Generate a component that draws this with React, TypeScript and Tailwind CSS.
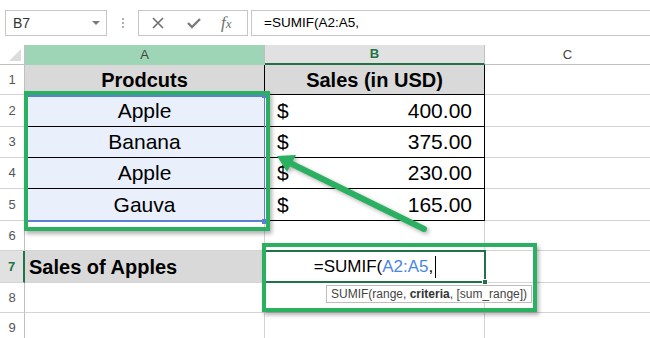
import React from "react";

const GREEN = "#2bb061";

type RowDef = {
  num: string;
  h: string;
  a: React.ReactNode;
  b: React.ReactNode;
  aCls: string;
  bCls: string;
  head?: string;
};

const Money = ({ v }: { v: string }) => (
  <div className="flex w-full items-center justify-between px-3">
    <span>$</span>
    <span>{v}</span>
  </div>
);

const rows: RowDef[] = [
  {
    num: "1",
    h: "h-[30px]",
    a: <span className="font-bold text-[20px]">Prodcuts</span>,
    b: <span className="font-bold text-[20px]">Sales (in USD)</span>,
    aCls: "bg-[#d9d9d9] border-r-black border-b-black justify-center",
    bCls: "bg-[#d9d9d9] border-r-black border-b-black justify-center",
  },
  {
    num: "2",
    h: "h-[32px]",
    a: "Apple",
    b: <Money v="400.00" />,
    aCls: "bg-[#e9effb] border-r-black border-b-black justify-center",
    bCls: "border-r-black border-b-black",
  },
  {
    num: "3",
    h: "h-[31px]",
    a: "Banana",
    b: <Money v="375.00" />,
    aCls: "bg-[#e9effb] border-r-black border-b-black justify-center",
    bCls: "border-r-black border-b-black",
  },
  {
    num: "4",
    h: "h-[31px]",
    a: "Apple",
    b: <Money v="230.00" />,
    aCls: "bg-[#e9effb] border-r-black border-b-black justify-center",
    bCls: "border-r-black border-b-black",
  },
  {
    num: "5",
    h: "h-[32px]",
    a: "Gauva",
    b: <Money v="165.00" />,
    aCls: "bg-[#e9effb] border-r-black border-b-black justify-center",
    bCls: "border-r-black border-b-black",
  },
  { num: "6", h: "h-[30px]", a: "", b: "", aCls: "", bCls: "" },
  {
    num: "7",
    h: "h-[32px]",
    a: <span className="font-bold text-[20px] pl-[4px]">Sales of Apples</span>,
    b: "",
    aCls: "bg-[#d9d9d9]",
    bCls: "",
    head: "sel",
  },
  { num: "8", h: "h-[30px]", a: "", b: "", aCls: "", bCls: "" },
  { num: "9", h: "h-[30px]", a: "", b: "", aCls: "", bCls: "" },
];

const FormulaBar = () => (
  <div className="flex h-[45px] items-start gap-0 pt-[10px] pl-[5px] font-['Liberation_Sans',sans-serif]">
    <div className="flex h-[26px] w-[102px] items-center justify-between border border-[#c6c6c6] pl-[7px] pr-[6px] text-[14px] text-[#333]">
      <span>B7</span>
      <span className="h-0 w-0 border-x-[4px] border-t-[4px] border-x-transparent border-t-[#7a7a7a]" />
    </div>
    <div className="flex h-[26px] w-[31px] flex-col items-center justify-center gap-[2px]">
      <span className="h-[2px] w-[2px] bg-[#b0b0b0]" />
      <span className="h-[2px] w-[2px] bg-[#b0b0b0]" />
      <span className="h-[2px] w-[2px] bg-[#b0b0b0]" />
    </div>
    <div className="flex h-[26px] w-[110px] items-center border border-[#c6c6c6] pl-[12px]">
      <svg width="14" height="14" viewBox="0 0 14 14">
        <path d="M2 2 L12 12 M12 2 L2 12" stroke="#6e6e6e" strokeWidth="1.6" />
      </svg>
      <svg width="16" height="14" viewBox="0 0 16 14" className="ml-[21px]">
        <path d="M2 7 L6 11 L14 3" stroke="#7a7a7a" strokeWidth="2.4" fill="none" />
      </svg>
      <span className="ml-[19px] font-['Liberation_Serif',serif] text-[17px] italic text-[#6e6e6e]">
        f<span className="text-[13px]">x</span>
      </span>
    </div>
    <div className="ml-[3px] flex h-[26px] flex-1 items-center border-y border-l border-[#c6c6c6] pl-[12px] text-[13.5px] text-black">
      =SUMIF(A2:A5,
    </div>
  </div>
);

const Header = () => (
  <div className="flex h-[20px] text-[13px] text-[#444]">
    <div className="relative w-[25px] border-r border-b border-[#c0c0c0] bg-white">
      <span className="absolute right-[3px] bottom-[3px] h-0 w-0 border-t-[12px] border-t-transparent border-r-[12px] border-r-[#dcdcdc]" />
    </div>
    <div className="flex w-[240px] items-center justify-center bg-[#9fd5b7] border-r border-[#c0c0c0]">A</div>
    <div className="flex w-[220px] items-center justify-center border-r border-b-2 border-r-[#c0c0c0] border-b-[#217346] bg-[#e1e1e1] font-bold text-[#217346]">
      B
    </div>
    <div className="flex flex-1 items-center justify-center border-b border-[#c0c0c0] bg-white">C</div>
  </div>
);

export default function App() {
  return (
    <div className="relative h-[338px] w-[650px] overflow-hidden bg-white font-['Liberation_Sans',sans-serif]">
      <FormulaBar />
      <Header />
      <div className="flex flex-col">
        {rows.map((r) => (
          <div key={r.num} className={`flex ${r.h} text-[21px] text-black`}>
            <div
              className={
                r.head === "sel"
                  ? "flex w-[25px] items-center justify-center border-r-2 border-b border-r-[#217346] border-b-[#d4d4d4] bg-[#e1e1e1] text-[13px] font-bold text-[#217346]"
                  : "flex w-[25px] items-center justify-center border-r border-b border-r-[#c0c0c0] border-b-[#d4d4d4] bg-white text-[13px] text-[#555]"
              }
            >
              {r.num}
            </div>
            <div className={`flex w-[240px] items-center border-r border-b border-[#d4d4d4] ${r.aCls}`}>{r.a}</div>
            <div className={`flex w-[220px] items-center border-r border-b border-[#d4d4d4] ${r.bCls}`}>{r.b}</div>
            <div className="flex-1 border-b border-[#d4d4d4]" />
          </div>
        ))}
      </div>

      {/* range highlight A2:A5 */}
      <div className="absolute left-[26px] top-[95px] h-[127px] w-[239px] border-y-2 border-x border-[#5a80d6]">
        <span className="absolute -right-[3px] -top-[4px] h-[5px] w-[5px] bg-[#5a80d6]" />
        <span className="absolute -right-[3px] -bottom-[4px] h-[5px] w-[5px] bg-[#5a80d6]" />
      </div>

      {/* active cell B7 */}
      <div className="absolute left-[264px] top-[250px] flex h-[33px] w-[222px] items-center justify-center border-2 border-[#217346] bg-white text-[17px] text-black">
        <span>=SUMIF(</span>
        <span className="text-[#4a86e8]">A2:A5</span>
        <span>,</span>
        <span className="ml-[2px] h-[22px] w-px bg-black" />
        <span className="absolute -right-[4px] -bottom-[4px] h-[6px] w-[6px] border border-white bg-[#217346]" />
      </div>

      {/* tooltip */}
      <div className="absolute left-[326px] top-[285px] flex h-[18px] items-center whitespace-pre border border-[#bdbdbd] bg-white px-[4px] text-[12px] text-[#444]">
        SUMIF(range, <b className="text-[#333]">criteria</b>, [sum_range])
      </div>

      {/* green callouts */}
      <div
        className="absolute left-[24px] top-[91px] h-[140px] w-[246px] border-4 shadow-[2px_3px_4px_rgba(0,0,0,0.3)]"
        style={{ borderColor: GREEN }}
      />
      <div
        className="absolute left-[262px] top-[243px] h-[69px] w-[275px] border-4 shadow-[2px_3px_4px_rgba(0,0,0,0.3)]"
        style={{ borderColor: GREEN }}
      />

      {/* arrow */}
      <svg
        className="absolute left-0 top-0 drop-shadow-[2px_2px_2px_rgba(0,0,0,0.3)]"
        width="650"
        height="338"
        viewBox="0 0 650 338"
      >
        <line x1="424" y1="229" x2="290" y2="163" stroke={GREEN} strokeWidth="6" strokeLinecap="round" />
        <polygon points="277,156 296,155 287,172" fill={GREEN} />
      </svg>
    </div>
  );
}
